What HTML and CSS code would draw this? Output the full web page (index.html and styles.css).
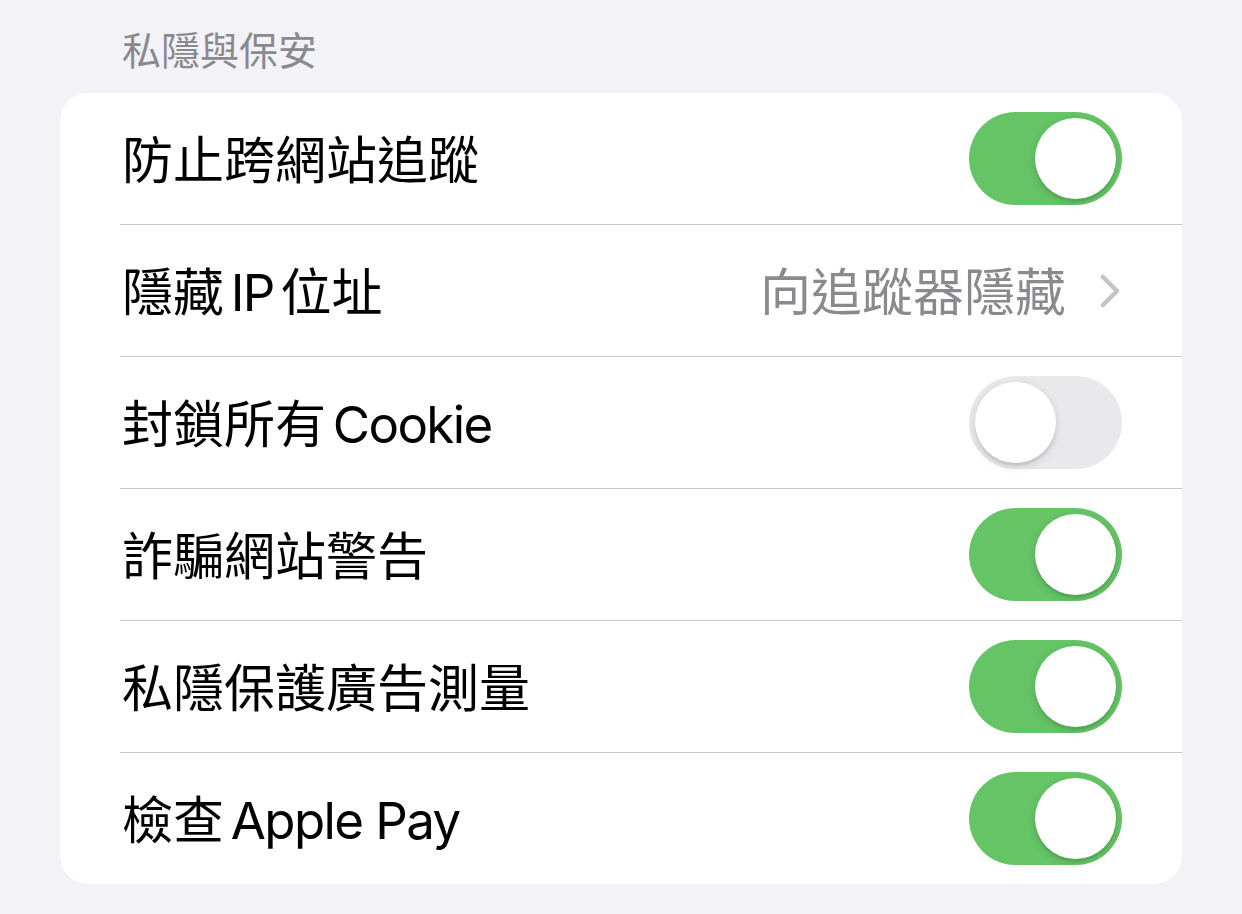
FILE: index.html
```html
<!DOCTYPE html>
<html lang="zh-Hant">
<head>
<meta charset="utf-8">
<link rel="stylesheet" href="styles.css">
</head>
<body>
<div class="page">
  <div class="section-title">私隱與保安</div>
  <div class="card">
    <div class="row">
      <span class="label">防止跨網站追蹤</span>
      <span class="switch on"><span class="knob"></span></span>
    </div>
    <div class="row">
      <span class="label">隱藏<span class="lat"> IP </span>位址</span>
      <span class="value">向追蹤器隱藏</span>
      <svg class="chevron" width="20" height="34" viewBox="0 0 20 34"><path d="M3 3 L17 17 L3 31" fill="none" stroke="#c4c4c7" stroke-width="4.5" stroke-linecap="round" stroke-linejoin="round"/></svg>
    </div>
    <div class="row">
      <span class="label">封鎖所有<span class="lat"> Cookie</span></span>
      <span class="switch off"><span class="knob"></span></span>
    </div>
    <div class="row">
      <span class="label">詐騙網站警告</span>
      <span class="switch on"><span class="knob"></span></span>
    </div>
    <div class="row">
      <span class="label">私隱保護廣告測量</span>
      <span class="switch on"><span class="knob"></span></span>
    </div>
    <div class="row last">
      <span class="label">檢查<span class="lat"> Apple<span class="sp"> </span>Pay</span></span>
      <span class="switch on"><span class="knob"></span></span>
    </div>
  </div>
</div>
</body>
</html>
```
FILE: styles.css
```css
html, body {
  margin: 0;
  padding: 0;
  background: #f2f2f7;
}
body {
  font-family: Inter, "Noto Sans CJK TC", sans-serif;
  width: 1242px;
  height: 914px;
  overflow: hidden;
}
.page {
  padding: 0 60px;
}
.section-title {
  height: 93px;
  box-sizing: border-box;
  padding: 28px 0 0 62px;
  font-size: 39px;
  line-height: 46px;
  color: #8a8a8e;
}
.card {
  background: #ffffff;
  border-radius: 28px;
  overflow: hidden;
  padding-left: 60px;
}
.row {
  height: 132px;
  box-sizing: border-box;
  border-bottom: 1px solid #c8c8cc;
  display: flex;
  align-items: center;
  padding-right: 60px;
}
.row.last {
  border-bottom: none;
  height: 131px;
}
.label {
  flex: 1;
  font-size: 51px;
  color: #000000;
  padding-left: 2px;
  padding-top: 4px;
  line-height: 60px;
}
.lat {
  letter-spacing: -1.6px;
  word-spacing: -6px;
}
.lat .sp {
  word-spacing: 0;
}
.value {
  font-size: 51px;
  color: #8a8a8e;
  line-height: 60px;
  padding-top: 4px;
  margin-right: 34px;
}
.chevron {
  display: block;
  margin-right: 2px;
}
.switch {
  width: 153px;
  height: 93px;
  border-radius: 47px;
  position: relative;
  box-sizing: border-box;
}
.switch.on {
  background: #65c466;
}
.switch.off {
  background: #e9e9eb;
}
.knob {
  position: absolute;
  top: 6px;
  width: 81px;
  height: 81px;
  border-radius: 50%;
  background: #ffffff;
  box-shadow: 0 3px 8px rgba(0,0,0,0.15), 0 3px 1px rgba(0,0,0,0.06);
}
.switch.on .knob {
  right: 6px;
}
.switch.off .knob {
  left: 6px;
}
```
